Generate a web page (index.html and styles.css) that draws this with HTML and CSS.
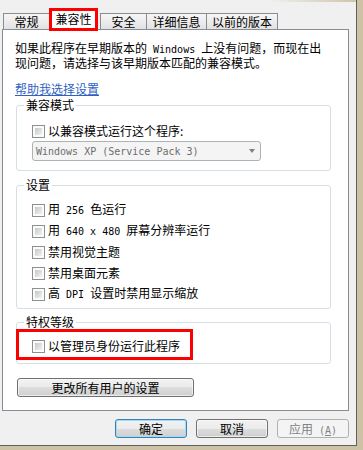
FILE: index.html
```html
<!DOCTYPE html>
<html lang="zh-CN">
<head>
<meta charset="utf-8">
<link rel="stylesheet" href="styles.css">
</head>
<body>
<div class="window">
  <div class="tabs">
    <div class="tab tab-first">常规</div>
    <div class="tab tab-selected">兼容性</div>
    <div class="tab tab-safe">安全</div>
    <div class="tab tab-detail">详细信息</div>
    <div class="tab tab-prev">以前的版本</div>
  </div>
  <div class="panel">
    <p class="desc">如果此程序在早期版本的<span class="mono"> Windows </span>上没有问题，而现在出<br>现问题，请选择与该早期版本匹配的兼容模式。</p>
    <div class="link-line"><a class="link" href="#">帮助我选择设置</a></div>
    <fieldset class="group group-compat">
      <legend>兼容模式</legend>
      <div class="row indent"><span class="cb"></span><span>以兼容模式运行这个程序:</span></div>
      <div class="select indent"><span class="mono">Windows XP (Service Pack 3)</span><span class="arrow"></span></div>
    </fieldset>
    <fieldset class="group group-settings">
      <legend>设置</legend>
      <div class="row indent"><span class="cb"></span><span>用<span class="mono"> 256 </span>色运行</span></div>
      <div class="row indent"><span class="cb"></span><span>用<span class="mono"> 640 x 480 </span>屏幕分辨率运行</span></div>
      <div class="row indent"><span class="cb"></span><span>禁用视觉主题</span></div>
      <div class="row indent"><span class="cb"></span><span>禁用桌面元素</span></div>
      <div class="row indent"><span class="cb"></span><span>高<span class="mono"> DPI </span>设置时禁用显示缩放</span></div>
    </fieldset>
    <fieldset class="group group-priv">
      <legend>特权等级</legend>
      <div class="highlight">
        <div class="row"><span class="cb"></span><span>以管理员身份运行此程序</span></div>
      </div>
    </fieldset>
    <div class="btn btn-all">更改所有用户的设置</div>
  </div>
  <div class="footer">
    <div class="btn btn-default">确定</div>
    <div class="btn">取消</div>
    <div class="btn btn-disabled">应用<span class="mono"> (<u>A</u>)</span></div>
  </div>
</div>
</body>
</html>
```
FILE: styles.css
```css
html, body {
  margin: 0;
  padding: 0;
}
body {
  background: #cdc2a5;
  font-family: "Noto Sans CJK SC", "Noto Sans", sans-serif;
  font-size: 12px;
  color: #000;
  width: 363px;
  height: 450px;
  overflow: hidden;
}
.mono {
  font-family: "DejaVu Sans Mono", "Liberation Mono", monospace;
  font-size: 10px;
  white-space: pre;
}
.window {
  width: 356px;
  height: 445px;
  background: #f0f0f0;
  border-right: 1px solid #5f5f5f;
  border-bottom: 1px solid #5f5f5f;
  background-image: linear-gradient(90deg, rgba(240,240,240,0) 0%, rgba(240,240,240,0) 75%, #cfc6ae 100%);
  background-size: 100% 2px;
  background-repeat: no-repeat;
}
.tabs {
  display: flex;
  align-items: flex-end;
  height: 29px;
  padding-left: 3px;
}
.tab {
  box-sizing: border-box;
  height: 16px;
  border: 1px solid #898c95;
  border-bottom: none;
  background: linear-gradient(#f6f6f6, #e2e2e2);
  text-align: center;
  line-height: 15px;
}
.tab-first { width: 47px; }
.tab-selected {
  width: 49px;
  height: 23px;
  margin-left: -1px;
  margin-bottom: -2px;
  border: 3px solid #ff0000;
  background: #fff;
  line-height: 16px;
  position: relative;
  z-index: 1;
}
.tab-safe { width: 47px; margin-left: 2px; }
.tab-detail { width: 61px; margin-left: -1px; }
.tab-prev { width: 72px; margin-left: -1px; }
.panel {
  box-sizing: border-box;
  margin-left: 2px;
  width: 347px;
  height: 382px;
  border: 1px solid #898c95;
  background: #fff;
  padding: 11px 0 0 12px;
}
.desc {
  margin: 0;
  line-height: 13px;
  white-space: nowrap;
}
.link-line {
  margin-top: 13px;
  line-height: 14px;
}
.link {
  color: #2f62c0;
  text-decoration: underline;
}
.group {
  margin: 2px 0 0 1px;
  width: 315px;
  box-sizing: border-box;
  border: 1px solid #d5dfe5;
  border-radius: 3px;
  min-inline-size: 0;
}
.group legend {
  padding: 0 2px;
  line-height: 14px;
}
.group-compat { padding: 12px 0 9px 7px; }
.group-settings {
  margin-top: 7px;
  padding: 11px 0 7px 7px;
  display: flex;
  flex-direction: column;
  gap: 7px;
}
.group-priv {
  margin-top: 6px;
  padding: 0 0 3px 7px;
}
.indent { margin-left: 8px; }
.row {
  display: flex;
  align-items: center;
  gap: 3px;
  height: 14px;
  line-height: 14px;
  white-space: nowrap;
}
.cb {
  display: inline-block;
  box-sizing: border-box;
  width: 13px;
  height: 13px;
  border: 1px solid #8e8f8f;
  padding: 2px;
  background: linear-gradient(135deg, #c4c7cc, #f2f2f2) content-box, #fbfbfb;
  flex: none;
}
.select {
  box-sizing: border-box;
  margin-top: 3px;
  width: 229px;
  height: 20px;
  border: 1px solid #adb2b5;
  border-radius: 3px;
  background: #f4f4f4;
  color: #6d6d6d;
  display: flex;
  align-items: center;
  padding-left: 3px;
}
.arrow {
  margin-left: auto;
  margin-right: 5px;
  width: 0;
  height: 0;
  border-top: 4px solid #808080;
  border-left: 3.5px solid transparent;
  border-right: 3.5px solid transparent;
}
.highlight {
  box-sizing: border-box;
  margin-left: -8px;
  width: 177px;
  height: 31px;
  border: 3px solid #ff0000;
  padding: 7px 0 0 13px;
}
.btn {
  box-sizing: border-box;
  height: 19px;
  width: 72px;
  border: 1px solid #707070;
  border-radius: 3px;
  background: linear-gradient(#f2f2f2 0%, #ebebeb 50%, #dddddd 50%, #cfcfcf 100%);
  box-shadow: inset 0 0 0 1px rgba(255,255,255,0.6);
  text-align: center;
  line-height: 17px;
  white-space: nowrap;
}
.btn-all {
  margin: 14px 0 0 2px;
  width: 177px;
}
.footer {
  display: flex;
  justify-content: flex-end;
  gap: 9px;
  margin-top: 8px;
  padding-right: 7px;
}
.btn-default {
  border-color: #3c7fb1;
  box-shadow: inset 0 0 0 1px #9ddcfb;
}
.btn-disabled {
  border-color: #adb2b5;
  background: #f4f4f4;
  box-shadow: none;
  color: #838383;
}
```
